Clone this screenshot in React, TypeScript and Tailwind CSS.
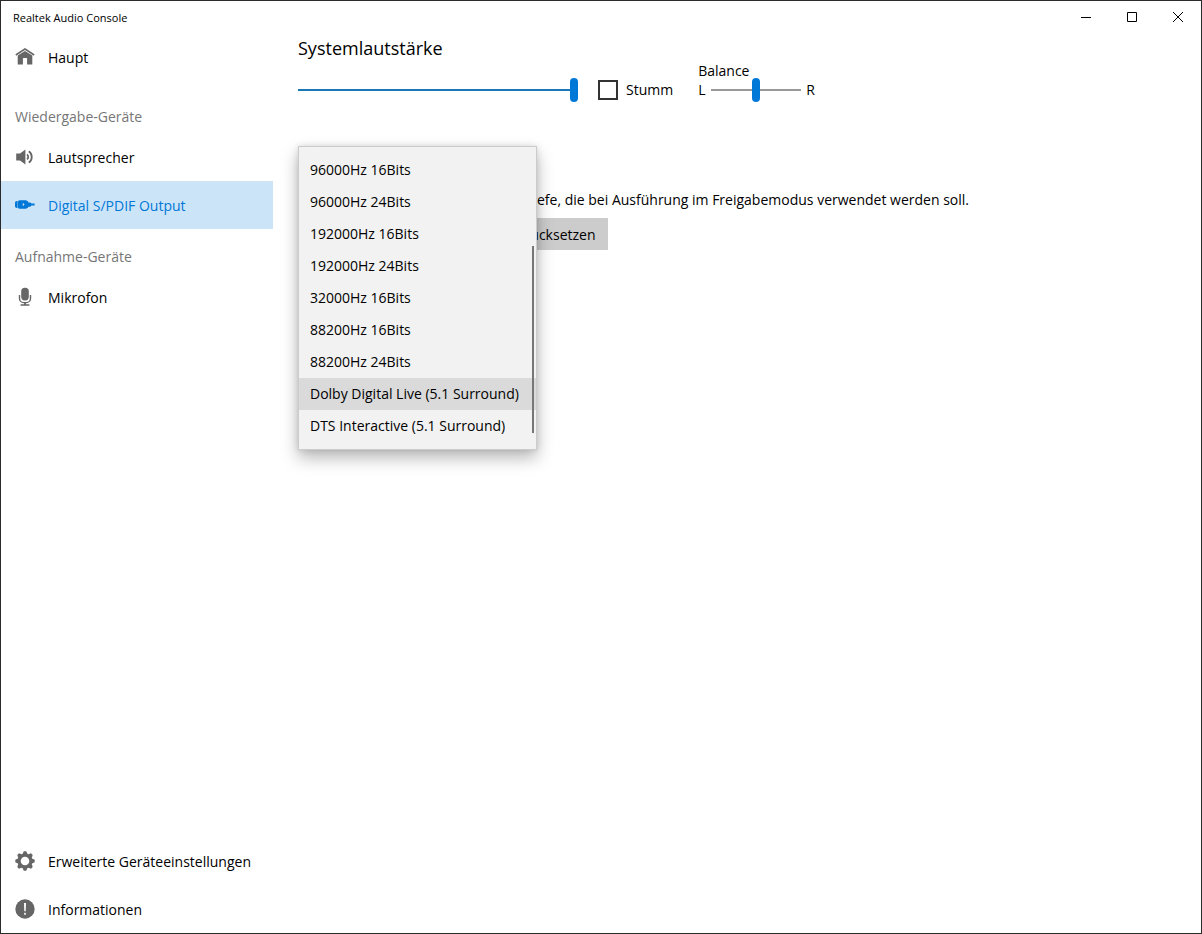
import { useState } from 'react'
import type { ReactNode } from 'react'

const FORMATS = [
    '96000Hz 16Bits',
    '96000Hz 24Bits',
    '192000Hz 16Bits',
    '192000Hz 24Bits',
    '32000Hz 16Bits',
    '88200Hz 16Bits',
    '88200Hz 24Bits',
    'Dolby Digital Live (5.1 Surround)',
    'DTS Interactive (5.1 Surround)'
]

const SLIDER_THUMB =
    '[&::-webkit-slider-thumb]:appearance-none [&::-webkit-slider-thumb]:w-2 [&::-webkit-slider-thumb]:h-6 [&::-webkit-slider-thumb]:-mt-[11px] [&::-webkit-slider-thumb]:rounded-full [&::-webkit-slider-thumb]:bg-[#0078d7] [&::-webkit-slider-runnable-track]:h-0.5'

function HomeIcon() {
    return (
        <svg width="20" height="20" viewBox="0 0 20 20" fill="currentColor" aria-hidden="true">
            <path d="M10 1 19.6 7.2 18.8 8.8 10 3.1 1.2 8.8.4 7.2z" />
            <path d="M10 3.9 17.3 8.6V17.5H12.1V11.7a.6.6 0 0 0-.6-.6H8.5a.6.6 0 0 0-.6.6V17.5H2.7V8.6z" />
        </svg>
    )
}

function SpeakerIcon() {
    return (
        <svg width="20" height="20" viewBox="0 0 20 20" fill="currentColor" aria-hidden="true">
            <path d="M1.2 6.6H5L10.4 2.4V17.4L5 13.4H1.2z" />
            <g fill="none" stroke="currentColor" strokeWidth="1.8">
                <path d="M12 7.4a3.2 3.2 0 0 1 0 5" />
                <path d="M13.8 4.2a7 7 0 0 1 0 11.4" />
            </g>
        </svg>
    )
}

function PlugIcon() {
    return (
        <svg width="20" height="20" viewBox="0 0 20 20" fill="currentColor" aria-hidden="true">
            <path d="M1.8 6H2.6V13H1.8A1.8 1.8 0 0 1 0 11.2V7.8A1.8 1.8 0 0 1 1.8 6z" />
            <path
                fillRule="evenodd"
                d="M4.6 5.2H11L13.2 6.4V7.4H15.4L16.4 8.6H19.6V10.4H16.4L15.4 11.8H13.2V12.6L11 13.8H4.6A1.6 1.6 0 0 1 3 12.2V6.8A1.6 1.6 0 0 1 4.6 5.2zM7.8 7.8V11.2L9.6 9.5z"
            />
        </svg>
    )
}

function MicIcon() {
    return (
        <svg width="20" height="20" viewBox="0 0 20 20" fill="currentColor" aria-hidden="true">
            <rect x="6.2" y=".8" width="7.6" height="12.6" rx="3.6" />
            <path d="M4.5 8v3.4a4.2 4.2 0 0 0 4.2 4.2h2.6a4.2 4.2 0 0 0 4.2-4.2V8" fill="none" stroke="currentColor" strokeWidth="1.4" />
            <path d="M9.1 15.4h1.8v1.8h3.5v1.6H5.6v-1.6h3.5z" />
        </svg>
    )
}

function GearIcon() {
    return (
        <svg width="20" height="20" viewBox="0 0 20 20" fill="currentColor" aria-hidden="true">
            {[0, 45, 90, 135, 180, 225, 270, 315].map((angle) => (
                <path key={angle} d="M7 4 8.8.3h2.4L13 4z" transform={`rotate(${angle} 10 10)`} />
            ))}
            <circle cx="10" cy="10" r="5.8" fill="none" stroke="currentColor" strokeWidth="3" />
        </svg>
    )
}

function InfoIcon() {
    return (
        <svg width="20" height="20" viewBox="0 0 20 20" aria-hidden="true">
            <circle cx="10" cy="10" r="9.7" fill="currentColor" />
            <path d="M9 4h2l-.3 8.2H9.3z" fill="white" />
            <rect x="9.2" y="13.8" width="1.6" height="2" fill="white" />
        </svg>
    )
}

interface NavItemProps {
    icon: ReactNode
    label: string
    active?: boolean
}

function NavItem({ icon, label, active }: NavItemProps) {
    return (
        <a
            href="#"
            aria-current={active ? 'page' : undefined}
            className={
                active
                    ? 'flex h-12 items-center gap-[13px] bg-[#cce4f7] pl-3.5 text-[#0078d7]'
                    : 'flex h-12 items-center gap-[13px] pl-3.5 text-black'
            }
        >
            <span className={active ? 'text-[#0078d7]' : 'text-[#666666]'}>{icon}</span>
            <span className="pt-0.5">{label}</span>
        </a>
    )
}

function TitleBar() {
    return (
        <header className="flex h-8 items-center justify-between pl-3">
            <h1 className="pt-0.5 text-[11px]">Realtek Audio Console</h1>
            <div className="flex">
                <button type="button" aria-label="Minimieren" className="flex h-8 w-[46px] items-center justify-center">
                    <svg width="10" height="10" viewBox="0 0 10 10" stroke="black">
                        <path d="M0 5.5h10" />
                    </svg>
                </button>
                <button type="button" aria-label="Maximieren" className="flex h-8 w-[46px] items-center justify-center">
                    <svg width="10" height="10" viewBox="0 0 10 10" stroke="black" fill="none">
                        <path d="M.5.5h9v9h-9z" />
                    </svg>
                </button>
                <button type="button" aria-label="Schließen" className="flex h-8 w-[46px] items-center justify-center">
                    <svg width="10" height="10" viewBox="0 0 10 10" stroke="black">
                        <path d="M0 0l10 10M10 0 0 10" />
                    </svg>
                </button>
            </div>
        </header>
    )
}

export default function App() {
    const [volume, setVolume] = useState(100)
    const [balance, setBalance] = useState(50)
    const [muted, setMuted] = useState(false)
    const [format, setFormat] = useState('Dolby Digital Live (5.1 Surround)')
    const [open, setOpen] = useState(true)

    return (
        <div className="flex min-h-screen flex-col border border-[#2b2b2b] bg-white font-['Open_Sans','Noto_Sans',sans-serif] text-[14px] leading-5 text-black">
            <TitleBar />

            <div className="flex flex-1">
                {/* Navigation */}
                <nav className="flex w-[272px] shrink-0 flex-col justify-between">
                    <div>
                        <NavItem icon={<HomeIcon />} label="Haupt" />
                        <h2 className="mt-5 pl-3.5 leading-8 text-[#767676]">Wiedergabe-Geräte</h2>
                        <NavItem icon={<SpeakerIcon />} label="Lautsprecher" />
                        <NavItem icon={<PlugIcon />} label="Digital S/PDIF Output" active />
                        <h2 className="mt-3 pl-3.5 leading-8 text-[#767676]">Aufnahme-Geräte</h2>
                        <NavItem icon={<MicIcon />} label="Mikrofon" />
                    </div>
                    <div>
                        <NavItem icon={<GearIcon />} label="Erweiterte Geräteeinstellungen" />
                        <NavItem icon={<InfoIcon />} label="Informationen" />
                    </div>
                </nav>

                <main className="flex-1 pt-px pl-[25px]">
                    {/* Systemlautstärke */}
                    <h2 className="text-[18px] leading-7">Systemlautstärke</h2>
                    <div className="flex h-10 items-end">
                        <input
                            type="range"
                            aria-label="Systemlautstärke"
                            value={volume}
                            onChange={(e) => setVolume(Number(e.target.value))}
                            className={`h-6 w-[280px] appearance-none bg-transparent [&::-webkit-slider-runnable-track]:bg-[#1a78b8] ${SLIDER_THUMB}`}
                        />
                        <label className="ml-5 flex h-6 items-center gap-2">
                            <input
                                type="checkbox"
                                checked={muted}
                                onChange={(e) => setMuted(e.target.checked)}
                                className="size-5 appearance-none border-2 border-[#333333] checked:bg-[#0078d7]"
                            />
                            Stumm
                        </label>
                        <div className="ml-[25px]">
                            <label htmlFor="balance" className="block leading-3.5">Balance</label>
                            <div className="flex h-6 items-center gap-[5px]">
                                <span className="w-2">L</span>
                                <input
                                    id="balance"
                                    type="range"
                                    value={balance}
                                    onChange={(e) => setBalance(Number(e.target.value))}
                                    className={`h-6 w-[90px] appearance-none bg-transparent [&::-webkit-slider-runnable-track]:bg-[#999999] ${SLIDER_THUMB}`}
                                />
                                <span>R</span>
                            </div>
                        </div>
                    </div>

                    {/* Standardformat */}
                    <section className="relative mt-11 pt-10">
                        <p className="pl-[239px] leading-7">
                            efe, die bei Ausführung im Freigabemodus verwendet werden soll.
                        </p>
                        <div className="mt-1 flex gap-2">
                            <select
                                aria-label="Standardformat"
                                value={format}
                                onChange={(e) => setFormat(e.target.value)}
                                onMouseDown={() => setOpen(true)}
                                className="h-8 w-[190px] border-2 border-[#999999] px-2"
                            >
                                {FORMATS.map((item) => (
                                    <option key={item}>{item}</option>
                                ))}
                            </select>
                            <button type="button" className="h-8 bg-[#cccccc] px-3 pt-0.5">Zurücksetzen</button>
                        </div>

                        {open && (
                            <div className="absolute top-0 left-0 w-[239px] border border-[#cccccc] bg-[#f2f2f2] py-[7px] shadow-[0_8px_16px_rgba(0,0,0,0.28),0_0_6px_rgba(0,0,0,0.12)]">
                                <ul role="listbox" aria-label="Formate">
                                    {FORMATS.map((item) => (
                                        <li key={item} role="option" aria-selected={item === format}>
                                            <button
                                                type="button"
                                                onClick={() => {
                                                    setFormat(item)
                                                    setOpen(false)
                                                }}
                                                className={
                                                    item === format
                                                        ? 'block h-8 w-full bg-[#dadada] pl-[11px] text-left whitespace-nowrap'
                                                        : 'block h-8 w-full pl-[11px] text-left whitespace-nowrap'
                                                }
                                            >
                                                {item}
                                            </button>
                                        </li>
                                    ))}
                                </ul>
                                <div className="absolute right-0.5 bottom-4 h-[187px] w-0.5 bg-[#767676]" />
                            </div>
                        )}
                    </section>
                </main>
            </div>
        </div>
    )
}
